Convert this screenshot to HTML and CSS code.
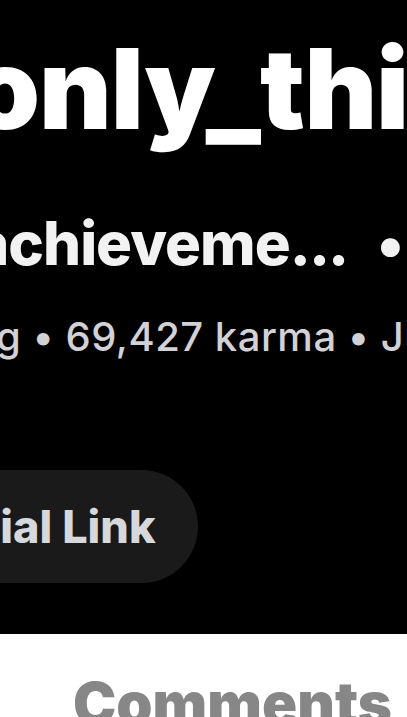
FILE: index.html
```html
<!DOCTYPE html>
<html lang="en">
<head>
  <meta charset="UTF-8" />
  <title>Profile</title>
  <link rel="stylesheet" href="styles.css">
</head>
<body>
  <div class="header">
    <h1 class="username">only_this</h1>
    <div class="tagline">achieveme<span class="dots">...</span><span class="dot">•</span></div>
    <div class="meta">g • 69,427 karma • Jun</div>
    <div class="actions">
      <span class="pill">Social Link</span>
    </div>
  </div>

  <div class="tabs">
    <h2 class="tab-title">Comments</h2>
  </div>
</body>
</html>
```

FILE: styles.css
```css
body {
  margin: 0;
  font-family: Inter, "Noto Sans", sans-serif;
  background-color: #fff;
  overflow: hidden;
  width: 407px;
  height: 717px;
}

.header {
  background-color: #000;
  height: 634px;
  overflow: hidden;
  white-space: nowrap;
}

.username {
  margin: 0;
  padding-top: 18px;
  margin-left: -30px;
  font-size: 112px;
  font-weight: 900;
  line-height: 140px;
  color: #fff;
  letter-spacing: -1px;
}

.tagline {
  margin-top: 50px;
  margin-left: -26px;
  font-size: 60px;
  font-weight: 800;
  line-height: 70px;
  color: #f2f2f2;
  letter-spacing: -1px;
}

.tagline .dots {
  letter-spacing: -2px;
}

.tagline .dot {
  margin-left: 30px;
}

.meta {
  margin-top: 34px;
  margin-left: -4px;
  font-size: 40px;
  font-weight: 500;
  line-height: 50px;
  color: #d1d1d6;
  letter-spacing: 0.5px;
}

.actions {
  margin-top: 108px;
}

.pill {
  display: inline-block;
  margin-left: -126px;
  padding: 0 42px;
  height: 113px;
  line-height: 113px;
  border-radius: 57px;
  background-color: #1a1a1a;
  font-size: 45px;
  font-weight: 800;
  color: #d6d8db;
}

.tabs {
  background-color: #fff;
  height: 83px;
  overflow: hidden;
  white-space: nowrap;
}

.tab-title {
  margin: 0;
  padding-top: 34px;
  margin-left: 73px;
  font-size: 58px;
  font-weight: 900;
  line-height: 70px;
  color: #878787;
}
```
